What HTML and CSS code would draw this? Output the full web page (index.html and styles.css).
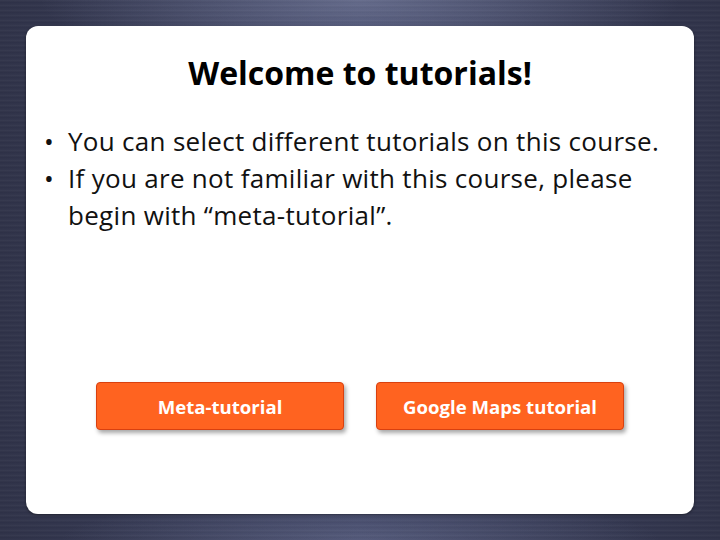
FILE: index.html
```html
<!DOCTYPE html>
<html lang="en">
<head>
<meta charset="utf-8">
<title>Welcome to tutorials</title>
<link rel="stylesheet" href="styles.css">
</head>
<body>
<main class="card">
  <h1 class="title">Welcome to tutorials!</h1>
  <ul class="list">
    <li>You can select different tutorials on this course.</li>
    <li>If you are not familiar with this course, please begin with “meta-tutorial”.</li>
  </ul>
  <div class="actions">
    <button class="btn">Meta-tutorial</button>
    <button class="btn">Google Maps tutorial</button>
  </div>
</main>
</body>
</html>
```
FILE: styles.css
```css
html, body {
  margin: 0;
  padding: 0;
  width: 720px;
  height: 540px;
  overflow: hidden;
}
body {
  font-family: "Open Sans", "Noto Sans", sans-serif;
  background:
    repeating-linear-gradient(180deg, rgba(255,255,255,0.035) 0px, rgba(255,255,255,0.035) 1px, rgba(0,0,0,0.04) 2px, rgba(0,0,0,0) 3px, rgba(255,255,255,0.02) 5px),
    radial-gradient(ellipse 320px 70px at 50% 0%, rgba(140,148,180,0.5), rgba(140,148,180,0) 100%),
    radial-gradient(ellipse 300px 45px at 50% 100%, rgba(120,128,160,0.4), rgba(120,128,160,0) 100%),
    linear-gradient(90deg, #2f3248 0%, #3b4060 50%, #2f3248 100%);
  padding: 26px 26px 26px 26px;
  box-sizing: border-box;
}
.card {
  width: 668px;
  height: 488px;
  box-sizing: border-box;
  background: #ffffff;
  border-radius: 12px;
  box-shadow: 0 1px 3px rgba(0,0,0,0.4);
  padding: 27px 0 0 18px;
  display: flex;
  flex-direction: column;
}
.title {
  margin: 0;
  font-size: 32px;
  font-weight: 700;
  line-height: 40px;
  text-align: center;
  color: #000;
  padding-right: 18px;
}
.list {
  list-style: none;
  margin: 30px 0 0 0;
  padding: 0;
  font-size: 26px;
  letter-spacing: 0.3px;
  line-height: 37px;
  color: #111;
}
.list li {
  display: flex;
}
.list li::before {
  content: "•";
  flex: 0 0 24px;
}
.actions {
  margin-top: 148px;
  display: flex;
  justify-content: center;
  gap: 32px;
  padding-right: 18px;
}
.btn {
  width: 248px;
  height: 48px;
  background: #ff6320;
  border: 1px solid #d9400f;
  border-radius: 4px;
  box-shadow: 2px 3px 4px rgba(0,0,0,0.35);
  color: #fff;
  font-family: "Open Sans", "Noto Sans", sans-serif;
  font-weight: 700;
  font-size: 18.6px;
  padding: 0;
}
```
